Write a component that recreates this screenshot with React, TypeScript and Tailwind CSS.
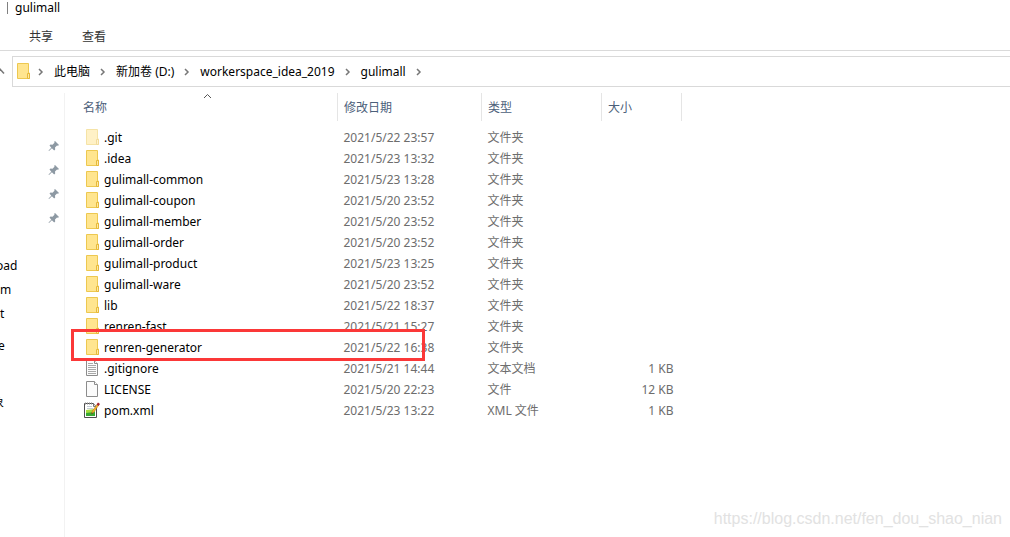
import React from 'react';

type Kind = 'folder' | 'hidden' | 'text' | 'blank' | 'xml';

interface Entry {
  name: string;
  date: string;
  type: string;
  size?: string;
  kind: Kind;
  marked?: boolean;
}

const ENTRIES: Entry[] = [
  { name: '.git', date: '2021/5/22 23:57', type: '文件夹', kind: 'hidden' },
  { name: '.idea', date: '2021/5/23 13:32', type: '文件夹', kind: 'folder' },
  { name: 'gulimall-common', date: '2021/5/23 13:28', type: '文件夹', kind: 'folder' },
  { name: 'gulimall-coupon', date: '2021/5/20 23:52', type: '文件夹', kind: 'folder' },
  { name: 'gulimall-member', date: '2021/5/20 23:52', type: '文件夹', kind: 'folder' },
  { name: 'gulimall-order', date: '2021/5/20 23:52', type: '文件夹', kind: 'folder' },
  { name: 'gulimall-product', date: '2021/5/23 13:25', type: '文件夹', kind: 'folder' },
  { name: 'gulimall-ware', date: '2021/5/20 23:52', type: '文件夹', kind: 'folder' },
  { name: 'lib', date: '2021/5/22 18:37', type: '文件夹', kind: 'folder' },
  { name: 'renren-fast', date: '2021/5/21 15:27', type: '文件夹', kind: 'folder' },
  { name: 'renren-generator', date: '2021/5/22 16:38', type: '文件夹', kind: 'folder', marked: true },
  { name: '.gitignore', date: '2021/5/21 14:44', type: '文本文档', size: '1 KB', kind: 'text' },
  { name: 'LICENSE', date: '2021/5/20 22:23', type: '文件', size: '12 KB', kind: 'blank' },
  { name: 'pom.xml', date: '2021/5/23 13:22', type: 'XML 文件', size: '1 KB', kind: 'xml' },
];

const CRUMBS = ['此电脑', '新加卷 (D:)', 'workerspace_idea_2019', 'gulimall'];

function FolderIcon() {
  return (
    <svg width="16" height="18" viewBox="0 0 16 18" className="block shrink-0">
      <path d="M2.5 .5h11v9.5h1v5.5h-12z" fill="#ffe58f" stroke="#edc850" />
      <path d="M12.5 15.5v-5h2v5z" fill="#ffe9a2" stroke="#e6b93a" />
    </svg>
  );
}

function FileIcon({ kind }: { kind: Kind }) {
  if (kind === 'folder') return <FolderIcon />;
  if (kind === 'hidden') return <span className="opacity-50"><FolderIcon /></span>;
  if (kind === 'xml') {
    return (
      <svg width="16" height="18" viewBox="0 0 16 18" className="block shrink-0">
        <path d="M.5 1.5h9l3 3v11H.5z" fill="#fff" stroke="#4d4d4d" />
        <path d="M9.5 1.5v3h3" fill="#ddd" stroke="#777" />
        <path d="M1.5 .5v2M3.5 .5v2M5.5 .5v2M7.5 .5v2" stroke="#888" />
        <path d="M3 4.5h5M3 6.5h6" stroke="#c4cdd4" />
        <path d="M2 8l9-1v7H2z" fill="#a5dc3c" />
        <path d="M2 11l9-1v4H2z" fill="#38a832" />
        <path d="M7.5 12l.8-3 4.7-6.5 1.5 1-4.5 6.5z" fill="#f7b42c" stroke="#a8701c" strokeWidth=".5" />
        <path d="M12.5 2.5L14 .5l2 1.5-1.5 2z" fill="#a6202c" />
        <path d="M7.5 12l.4-1.5 1 .7z" fill="#222" />
      </svg>
    );
  }
  return (
    <svg width="16" height="18" viewBox="0 0 16 18" className="block shrink-0">
      <path d="M2.5 .5h8l3 3v12h-11z" fill="#fbfbfb" stroke="#8c8c8c" />
      <path d="M10.5 .5v3h3" fill="#fff" stroke="#8c8c8c" />
      {kind === 'text' && <path d="M4 3.5h5M4 5.5h8M4 7.5h8M4 9.5h8M4 11.5h8M4 13.5h8" stroke="#a8a8a8" />}
    </svg>
  );
}

function PinIcon() {
  return (
    <svg width="12" height="12" viewBox="0 0 12 12">
      <path d="M7 1l4 4-1 .8-1-.3-2 2 .2 2-1 1-2.3-2.3L1 11l-.5-.5L3.300 7.700 1.500 5.500l1-1 2 .2 2-2L6.200 1.800z" fill="#8d99a3" />
    </svg>
  );
}

function CrumbArrow() {
  return (
    <svg width="6" height="8" viewBox="0 0 6 8" className="shrink-0">
      <path d="M1 1l3 3-3 3" fill="none" stroke="#777" strokeWidth="1.5" />
    </svg>
  );
}

export default function App() {
  return (
    <div className="relative flex min-h-screen flex-col overflow-hidden bg-white font-['Noto_Sans','Noto_Sans_CJK_SC',sans-serif] text-xs text-black">
      <header className="flex h-4 items-center gap-[7px] pl-[7px]">
        <span className="h-3 w-px bg-[#808080]" />
        <h1>gulimall</h1>
      </header>

      <nav className="flex h-[35px] items-center gap-[29px] border-b border-[#dadada] pt-[7px] pl-[29px] text-[#333]">
        <button type="button">共享</button>
        <button type="button">查看</button>
      </nav>

      <div className="flex pt-[5px]">
        <button type="button" aria-label="向上" className="flex w-3 items-center">
          <svg width="6" height="8" viewBox="0 0 6 8">
            <path d="M-1 0l5 5.5" fill="none" stroke="#777" strokeWidth="1.5" />
          </svg>
        </button>
        <div className="flex h-[31px] flex-1 items-center border-y border-l border-[#d9d9d9] pl-0.5">
          <FolderIcon />
          <ol className="-ml-px flex items-center gap-0.5">
            {CRUMBS.map((crumb) => (
              <li key={crumb} className="flex items-center">
                <span className="flex w-6 justify-center pr-0.5"><CrumbArrow /></span>
                <a href="#">{crumb}</a>
              </li>
            ))}
            <li className="flex w-6 justify-center pr-0.5"><CrumbArrow /></li>
          </ol>
        </div>
      </div>

      <div className="flex flex-1 pt-1.5">
        <aside className="w-[65px] shrink-0 overflow-hidden border-r border-[#f2f2f2] pt-[41px]">
          <ul>
            {[1, 2, 3, 4].map((n) => (
              <li key={n} className="flex h-6 items-center justify-end pr-1"><PinIcon /></li>
            ))}
          </ul>
          <ul className="pt-6">
            <li className="-ml-1 flex h-6 items-center">oad</li>
            <li className="flex h-6 items-center">m</li>
            <li className="flex h-6 items-center">t</li>
          </ul>
          <ul className="pt-2">
            <li className="-ml-0.5 flex h-6 items-center">e</li>
          </ul>
          <ul className="pt-[33px]">
            <li className="-ml-2 flex h-6 items-center">象</li>
          </ul>
        </aside>

        <main className="flex-1">
          <table className="w-[617px] table-fixed text-left">
            <colgroup>
              <col />
              <col className="w-36" />
              <col className="w-30" />
              <col className="w-20" />
            </colgroup>
            <thead className="text-[#4c607a]">
              <tr className="h-7">
                <th className="relative border-r border-[#e5e5e5] pt-0.5 pl-[18px] font-normal">
                  名称
                  <svg width="9" height="6" viewBox="0 0 9 6" className="absolute top-0 right-[125px]">
                    <path d="M1 5l3.5-3.5L8 5" fill="none" stroke="#555" />
                  </svg>
                </th>
                <th className="border-r border-[#e5e5e5] pt-0.5 pl-1.5 font-normal">修改日期</th>
                <th className="border-r border-[#e5e5e5] pt-0.5 pl-1.5 font-normal">类型</th>
                <th className="border-r border-[#e5e5e5] pt-0.5 pl-1.5 font-normal">大小</th>
              </tr>
            </thead>
            <tbody className="text-[#6d6d6d] before:block before:h-1.5">
              {ENTRIES.map((entry) => (
                <tr key={entry.name} className="h-[21px]">
                  <td className="relative pl-[19px] text-black">
                    <div className="flex items-center gap-1">
                      <FileIcon kind={entry.kind} />
                      {entry.name}
                    </div>
                    {entry.marked && (
                      <div className="absolute -top-2 left-1.5 z-10 h-8 w-[354px] border-3 border-[#fb3838]" />
                    )}
                  </td>
                  <td className="pl-1.5">{entry.date}</td>
                  <td className="pl-1.5">{entry.type}</td>
                  <td className="pr-2 text-right">{entry.size}</td>
                </tr>
              ))}
            </tbody>
          </table>
        </main>
      </div>

      {/* Watermark */}
      <p className="absolute right-2 bottom-1.5 font-['Liberation_Sans',sans-serif] text-base text-[#e2e2e2]">
        https://blog.csdn.net/fen_dou_shao_nian
      </p>
    </div>
  );
}
